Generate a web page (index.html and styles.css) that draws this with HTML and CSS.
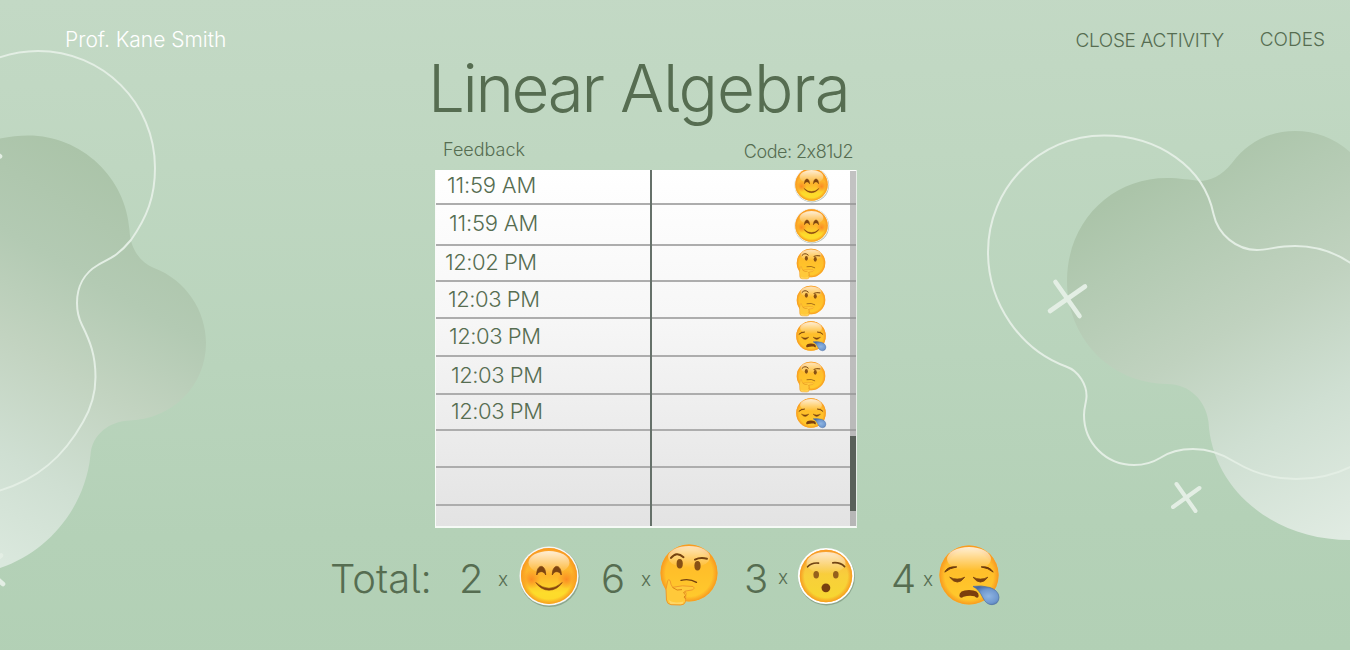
FILE: index.html
```html
<!DOCTYPE html>
<html lang="en">
<head>
<meta charset="utf-8">
<title>Linear Algebra</title>
<link rel="stylesheet" href="styles.css">
</head>
<body>
<svg class="defs" width="0" height="0" aria-hidden="true">
  <defs>
    <linearGradient id="skin" x1="0" y1="0" x2="0" y2="1">
      <stop offset="0" stop-color="#ffb52e"/><stop offset=".5" stop-color="#ffc02a"/><stop offset="1" stop-color="#ffcb2d"/>
    </linearGradient>
    <radialGradient id="rim" cx=".5" cy=".5" r=".5">
      <stop offset=".82" stop-color="#f7941e" stop-opacity="0"/><stop offset="1" stop-color="#f7941e" stop-opacity=".9"/>
    </radialGradient>
    <linearGradient id="sunny" x1="0" y1="0" x2="0" y2="1">
      <stop offset="0" stop-color="#ffb030"/><stop offset=".5" stop-color="#fdb62b"/><stop offset=".8" stop-color="#fddc2b"/><stop offset="1" stop-color="#fdd82a"/>
    </linearGradient>
    <linearGradient id="lemon" x1="0" y1="0" x2="0" y2="1">
      <stop offset="0" stop-color="#fbb545"/><stop offset=".5" stop-color="#f8cf3b"/><stop offset="1" stop-color="#f6d82f"/>
    </linearGradient>
    <linearGradient id="shine" x1="0" y1="0" x2="0" y2="1">
      <stop offset="0" stop-color="#fff" stop-opacity=".8"/><stop offset="1" stop-color="#fff" stop-opacity="0"/>
    </linearGradient>
    <radialGradient id="cheek">
      <stop offset="0" stop-color="#fb8322" stop-opacity=".85"/><stop offset="1" stop-color="#fb8a22" stop-opacity="0"/>
    </radialGradient>
    <radialGradient id="drop" cx=".6" cy=".55" r=".6">
      <stop offset="0" stop-color="#8fb5e2"/><stop offset=".6" stop-color="#6f98cf"/><stop offset="1" stop-color="#466aa3"/>
    </radialGradient>

    <symbol id="blush" viewBox="0 0 64 64">
      <circle cx="32.6" cy="33" r="30" fill="#53694f" opacity=".4"/>
      <circle cx="32" cy="32" r="29.6" fill="#f6f6f4"/>
      <circle cx="32" cy="32" r="28" fill="url(#sunny)"/>
      <circle cx="32" cy="32" r="28" fill="url(#rim)"/>
      <ellipse cx="32" cy="18.5" rx="20.5" ry="11.5" fill="url(#shine)"/>
      <circle cx="14.5" cy="35.5" r="9.5" fill="url(#cheek)"/>
      <circle cx="49.5" cy="35.5" r="9.5" fill="url(#cheek)"/>
      <path d="M19.700 31C19.700 19.500 28.700 19.500 28.700 31C27 26.500 21.600 26.500 19.700 31ZM35.300 31C35.300 19.500 44.300 19.500 44.300 31C42.400 26.500 37 26.500 35.300 31Z" fill="#7d4410" stroke="#7d4410" stroke-width=".8"/>
      <path d="M18.700 38.500Q32 50 45.300 38.500Q40 46.200 32 46.200Q24 46.200 18.700 38.500Z" fill="#84420f" stroke="#84420f" stroke-width=".6" stroke-linejoin="round"/>
    </symbol>

    <symbol id="thinking" viewBox="0 0 64 64">
      <circle cx="32" cy="30" r="28.5" fill="url(#skin)"/>
      <circle cx="32" cy="30" r="28.5" fill="url(#rim)"/>
      <ellipse cx="32" cy="14" rx="21" ry="11" fill="url(#shine)" opacity=".85"/>
      <ellipse cx="22.7" cy="20.7" rx="3.1" ry="4.7" fill="#875014"/>
      <ellipse cx="40.5" cy="22.7" rx="3.1" ry="4.7" fill="#875014"/>
      <path d="M14 14.900Q19.500 7.800 26.500 14.200M38 16.600Q43 14.200 50 15.700" fill="none" stroke="#75420f" stroke-width="2" stroke-linecap="round"/>
      <path d="M24 37.300Q33 35.300 39.500 39.400" fill="none" stroke="#75420f" stroke-width="1.300" stroke-linecap="round"/>
      <path d="M10.700 38Q11.400 35.400 13.100 37.600Q13.600 41.500 15.600 44.300Q25 41.700 36 43.500Q38.800 45 35.700 46.800L27.900 48.200Q30 50 28.700 53L28.500 58.700Q27.500 62 23.500 62L14 61.700Q10 61.200 9.500 57L9 46Z" fill="#ffc93a" stroke="#ef9a2a" stroke-width="1" stroke-linejoin="round"/>
      <path d="M15.600 44.500Q20 48.500 25 46.600M27.700 48.600Q25.300 50 28.300 51.600M28.400 52.500Q25.800 54 28.300 55.700" fill="none" stroke="#d77c12" stroke-width=".9"/>
      <path d="M11.500 57Q16 61 26.500 58.500L25.500 61H13.500Z" fill="#ffda72" opacity=".8"/>
    </symbol>

    <symbol id="hushed" viewBox="0 0 64 64">
      <circle cx="32.5" cy="33" r="28.4" fill="#53694f" opacity=".4"/>
      <circle cx="32" cy="32" r="28.1" fill="#fff"/>
      <circle cx="32" cy="32" r="26.2" fill="url(#lemon)"/>
      <circle cx="32" cy="32" r="26.2" fill="url(#rim)"/>
      <ellipse cx="32" cy="19" rx="19.5" ry="11" fill="url(#shine)" opacity=".9"/>
      <ellipse cx="22.2" cy="30.7" rx="2.8" ry="3.7" fill="#95601c"/>
      <ellipse cx="41.8" cy="30.7" rx="2.8" ry="3.7" fill="#95601c"/>
      <path d="M13.6 22.8Q17.5 18.4 24.5 19.1M38.8 18.8Q46 18 50.6 22.6" fill="none" stroke="#704414" stroke-width="1.7" stroke-linecap="round"/>
      <circle cx="31.9" cy="43.8" r="4.4" fill="#78400f"/>
    </symbol>

    <symbol id="sleepy" viewBox="0 0 64 64">
      <circle cx="32" cy="32" r="29.6" fill="url(#skin)"/>
      <circle cx="32" cy="32" r="29.6" fill="url(#rim)"/>
      <ellipse cx="32" cy="16" rx="22" ry="12" fill="url(#shine)"/>
      <path d="M7.8 29.1Q10.5 23 19.8 23.9Q12.5 25 7.8 29.1ZM44.2 23.9Q52.5 23 56.2 29.1Q51.5 25 44.2 23.9Z" fill="#6d3a0c" stroke="#6d3a0c" stroke-width="1" stroke-linejoin="round"/>
      <path d="M12.7 34.2Q20 38 27.7 34.2Q20.5 44 12.7 34.2ZM36 34.2Q43.5 38 50.9 34.2Q43.5 44 36 34.2Z" fill="#7b4310" stroke="#7b4310" stroke-width=".8" stroke-linejoin="round"/>
      <path d="M22.3 53Q22 47 32 47Q42 47 41.7 53Q41 56.5 37.5 53.2Q32 52.2 26.5 53.8Q23.5 56 22.3 53Z" fill="#7b3e0d"/>
      <path d="M36 43.4Q44 42 53 44.5Q61.5 47.4 62 54.2Q61.8 61.2 55 61.7Q49 61.7 45.5 54Q42 46.5 36 43.4Z" fill="url(#drop)" stroke="#4b6ea3" stroke-width=".7"/>
    </symbol>

    <linearGradient id="blobLeft" gradientUnits="userSpaceOnUse" x1="-45" y1="78" x2="-242.5" y2="420">
      <stop offset="0" stop-color="#abc4a9"/><stop offset=".27" stop-color="#b3cab3"/><stop offset=".5" stop-color="#c2d3c0"/><stop offset=".76" stop-color="#cfdfd2"/><stop offset="1" stop-color="#dae8dd"/>
    </linearGradient>
    <linearGradient id="blobRight" gradientUnits="userSpaceOnUse" x1="365" y1="633" x2="569" y2="985.5">
      <stop offset="0" stop-color="#abc4a9"/><stop offset=".16" stop-color="#b3cab2"/><stop offset=".42" stop-color="#c0d2bf"/><stop offset=".68" stop-color="#cfdfd2"/><stop offset="1" stop-color="#e0ebe2"/>
    </linearGradient>
  </defs>
</svg>

<svg class="backdrop" viewBox="0 0 1350 650" aria-hidden="true">
  <path fill="url(#blobLeft)" d="M0 138.5Q15 135.5 28 135.5C82 135.5 126 178 129.5 230C130 247 139 262 154 268C186 280 206 311 206 343C206 386 172 419 130 420.5C110 421 92 434 90.5 455C85 508 48 552 0 568Z"/>
  <path fill="url(#blobRight)" d="M1350 152C1334 138 1316 131 1295 131C1269 131 1247 143 1232 163C1222 176 1209 181 1200 181C1190 180 1180 178 1167 178C1111 178 1067 222 1067 281C1067 336 1108 383 1167 384C1190 384 1206 401 1208.5 422C1212 488 1272 540 1350 540Z"/>
  <g class="outline">
    <path d="M-2 58Q18 51 38 51C103 51 155 103 155 168C155 197 147 217 131 240C117 257 108 259 98 265C84 273 77 287 77 303C77 314 79 319 82 325C90 341 95.500 355 95.500 377C95.500 395 90 410 83 422C64 456 38 480 -2 491"/>
    <path d="M1352 264C1335 252 1316 246 1295 246C1277 246 1268 250 1257 250C1237 250 1218 235 1213.500 214C1204 167 1158 135.500 1104 135.500C1039 135.500 988 188 988 252C988 304 1021 350 1066 366.500C1079 371 1087 385 1086.500 397C1086 404 1084 407 1084 415C1084 443 1106 465 1134 465C1144 465 1152 463 1160 458C1169 452 1181 449 1193 449C1207 449 1221 453 1235 462C1255 474 1274 479 1296 479C1316 479 1335 475 1352 466"/>
  </g>
  <g class="cross">
    <path d="M1055.500 282L1079.500 316M1050 311L1085 286.500"/>
    <path class="cross-small" d="M1176.500 484L1195.500 511M1173 507L1199.500 488"/>
    <path d="M-6 152L0 156.300M-14 568L1 555.500M-8 574L3 584"/>
  </g>
</svg>

<div class="page">
  <header class="topbar">
    <div class="teacher">Prof. Kane Smith</div>
    <nav class="menu"><a class="close">CLOSE ACTIVITY</a><a class="codes">CODES</a></nav>
  </header>

  <h1 class="title"><span class="tight">Linear</span> Algebra</h1>

  <main class="board">
    <div class="captions"><span class="feedback">Feedback</span><span class="code">Code: 2x81J2</span></div>
    <div class="sheet">
      <div class="rows">
        <div class="row r1"><span class="time">11:59 AM</span><svg class="face big"><use href="#blush"/></svg></div>
        <div class="row r2"><span class="time">11:59 AM</span><svg class="face big"><use href="#blush"/></svg></div>
        <div class="row r3"><span class="time">12:02 PM</span><svg class="face"><use href="#thinking"/></svg></div>
        <div class="row r4"><span class="time">12:03 PM</span><svg class="face"><use href="#thinking"/></svg></div>
        <div class="row r5"><span class="time">12:03 PM</span><svg class="face"><use href="#sleepy"/></svg></div>
        <div class="row r6"><span class="time">12:03 PM</span><svg class="face"><use href="#thinking"/></svg></div>
        <div class="row r7"><span class="time">12:03 PM</span><svg class="face"><use href="#sleepy"/></svg></div>
        <div class="row"></div>
        <div class="row"></div>
        <div class="row"></div>
      </div>
      <div class="divider"></div>
      <div class="scroll"><div class="thumb"></div></div>
    </div>
  </main>

  <footer class="totals">
    <span class="label">Total:</span>
    <span class="num">2</span><span class="times">x</span><svg class="total-face"><use href="#blush"/></svg>
    <span class="num">6</span><span class="times">x</span><svg class="total-face raised"><use href="#thinking"/></svg>
    <span class="num">3</span><span class="times high">x</span><svg class="total-face"><use href="#hushed"/></svg>
    <span class="num">4</span><span class="times">x</span><svg class="total-face raised"><use href="#sleepy"/></svg>
  </footer>
</div>
</body>
</html>
```
FILE: styles.css
```css
* { box-sizing: border-box; }
body {
  margin: 0;
  width: 1350px;
  height: 650px;
  overflow: hidden;
  background: linear-gradient(179deg, #c3d9c5 0%, #bfd7c1 25%, #b9d4bc 55%, #b4d1b7 80%, #b2d0b5 100%);
  color: #566d51;
  font-family: Inter, "Liberation Sans", sans-serif;
  font-weight: 275;
}
.defs { position: absolute; }
.backdrop { position: absolute; left: 0; top: 0; width: 1350px; height: 650px; }
.outline { fill: none; stroke: #e3eee4; stroke-width: 2; }
.cross { fill: none; stroke: #e3eee4; stroke-width: 4.6; stroke-linecap: round; }
.cross-small { stroke-width: 4; }

.page { position: relative; height: 650px; }
.topbar { display: flex; justify-content: space-between; height: 60px; padding: 28px 25px 0 65px; }
.teacher { color: #fff; font-size: 21px; line-height: 24px; }
.menu { display: flex; gap: 36px; font-size: 19px; line-height: 24px; }
.close { padding-top: 1px; letter-spacing: -.35px; }
.title {
  margin: 0;
  padding-left: 428px;
  height: 76px;
  font-size: 65.5px;
  line-height: 57px;
  font-weight: 300;
  letter-spacing: -1px;
  white-space: nowrap;
  font-feature-settings: "cv05";
}
.tight { letter-spacing: -2.4px; }
.board { width: 422px; margin-left: 435px; }
.captions { display: flex; justify-content: space-between; height: 34px; padding: 3px 4px 0 8px; font-size: 18px; line-height: 22px; }
.code { padding-top: 2px; letter-spacing: -.5px; font-feature-settings: "calt" 0; }
.sheet {
  position: relative;
  height: 358px;
  overflow: hidden;
  background: linear-gradient(#fff, #f7f7f7 40%, #e3e3e3);
  border-bottom: 2px solid #f6faf6;
  border-left: 1px solid #f9fbf9;
  border-right: 1px solid #e6ede7;
}
.rows { display: grid; grid-template-rows: 35px 41px 36px 37px 37.500px 38.500px 36px 37px 37.500px 22.500px; }
.row {
  display: flex;
  align-items: center;
  justify-content: space-between;
  padding: 0 29px 0 10px;
  border-bottom: 2px solid #adadad;
}
.row:last-child { border-bottom: 0; }
.time { font-size: 22px; line-height: 24px; letter-spacing: -.45px; margin-top: -2px; }
.r1 .time { padding-left: 1px; margin-top: -3px; letter-spacing: -.2px; }
.r2 .time { padding-left: 3px; margin-top: -4px; letter-spacing: -.2px; }
.r3 .time { margin-left: -1px; }
.r4 .time { padding-left: 2px; }
.r5 .time { padding-left: 3px; }
.r6 .time, .r7 .time { padding-left: 5px; }
.r6 .time { margin-top: 0; }
.face { width: 32px; height: 32px; margin-top: 2px; }
.r5 .face { margin-top: -1px; }
.r6 .face { margin-top: 4px; }
.big { width: 37px; height: 37px; margin: 0 -2.500px -2px 0; flex: none; }
.r1 .big { margin-top: -6px; }
.r2 .big { margin-top: 0; }
.divider { position: absolute; left: 214px; top: 0; width: 2px; height: 358px; background: #66716a; }
.scroll { position: absolute; right: 0; top: 1px; width: 6px; height: 356px; padding-top: 265px; background: rgba(150, 150, 150, .58); }
.thumb { height: 75px; background: #59615a; }

.totals {
  display: grid;
  grid-template-columns: 129px 38px 19px 85px 39px 16px 88px 33px 16px 98px 31px 13.500px 64px;
  align-items: center;
  height: 64px;
  margin: 16px 0 0 331px;
}
.label, .num { font-size: 40px; line-height: 40px; margin-top: 6px; margin-left: -1px; }
.label { font-feature-settings: "cv05"; }
.times { font-size: 19px; line-height: 20px; margin-top: 7px; }
.high { margin-top: 3px; }
.total-face { width: 64px; height: 64px; }
.raised { margin-top: -3px; }
```
